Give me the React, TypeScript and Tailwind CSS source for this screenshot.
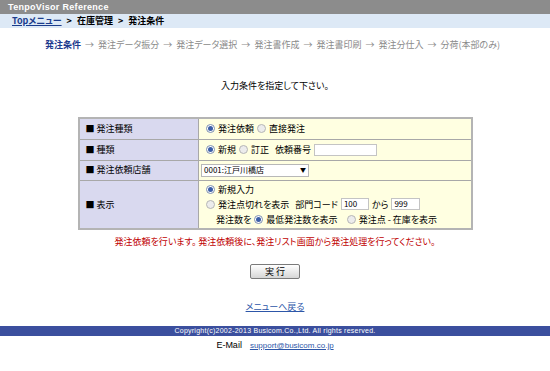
import React from 'react';

const Radio = ({ on }: { on?: boolean }) => (
  <span
    className={`inline-flex items-center justify-center w-[9px] h-[9px] rounded-full border ${
      on ? 'border-[#7d8fb0] bg-white' : 'border-[#b5b5b5] bg-[#ececec]'
    }`}
  >
    {on && <span className="w-[5px] h-[5px] rounded-full bg-[#3b5ea8]" />}
  </span>
);

const Box = ({ w, value }: { w: string; value?: string }) => (
  <span className={`inline-flex items-center ${w} h-[12px] border border-[#c4c4c4] bg-white px-[2px] text-[8px] leading-none`}>
    {value}
  </span>
);

const steps = ['発注データ振分', '発注データ選択', '発注書作成', '発注書印刷', '発注分仕入', '分荷(本部のみ)'];

const App = () => {
  return (
    <div
      className="w-[550px] h-[371px] bg-white text-[9px] text-black overflow-hidden [font-feature-settings:'palt']"
      style={{ fontFamily: '"Noto Sans CJK JP", "Liberation Sans", sans-serif' }}
    >
      <div
        className="h-[14px] bg-[#8c8c8c] pl-[8px] leading-[14px] font-bold text-white tracking-[0.3px]"
        style={{ fontFamily: '"Liberation Sans", sans-serif' }}
      >
        TenpoVisor Reference
      </div>
      <div className="h-[14px] bg-[#dde9f6] pl-[12px] leading-[14px] font-bold">
        <span className="underline text-[#1b3c8c]">Topメニュー</span>
        <span className="mx-[5px]">&gt;</span>在庫管理<span className="mx-[5px]">&gt;</span>発注条件
      </div>

      <div className="mt-[11px] h-[12px] leading-[12px] pl-[45px] flex items-center text-[#8a8a8a]">
        <span className="font-bold text-[#1d3b8e]">発注条件</span>
        {steps.map(s => (
          <React.Fragment key={s}>
            <span className="mx-[4px]">→</span>
            <span>{s}</span>
          </React.Fragment>
        ))}
      </div>

      <div className="mt-[29px] h-[12px] leading-[12px] text-center">入力条件を指定して下さい。</div>

      <table className="mt-[25px] mx-auto w-[395px] border-collapse border-2 border-[#b4b4b4]">
        <tbody>
          <tr className="h-[21px]">
            <td className="w-[120px] bg-[#d9d9ef] border border-[#a8a8a8] pl-[6px]">■ 発注種類</td>
            <td className="bg-[#ffffe1] border border-[#a8a8a8] pl-[7px]">
              <div className="flex items-center gap-[3px]">
                <Radio on /> <span>発注依頼</span> <Radio /> <span>直接発注</span>
              </div>
            </td>
          </tr>
          <tr className="h-[21px]">
            <td className="bg-[#d9d9ef] border border-[#a8a8a8] pl-[6px]">■ 種類</td>
            <td className="bg-[#ffffe1] border border-[#a8a8a8] pl-[7px]">
              <div className="flex items-center gap-[3px]">
                <Radio on /> <span>新規</span> <Radio /> <span>訂正</span>
                <span className="ml-[3px]">依頼番号</span>
                <Box w="w-[63px]" />
              </div>
            </td>
          </tr>
          <tr className="h-[20px]">
            <td className="bg-[#d9d9ef] border border-[#a8a8a8] pl-[6px]">■ 発注依頼店舗</td>
            <td className="bg-[#ffffe1] border border-[#a8a8a8] pl-[2px]">
              <span className="inline-flex items-center justify-between w-[108px] h-[13px] border border-[#b8b8b8] bg-white px-[2px] text-[8px] leading-none">
                <span>0001:江戸川橋店</span>
                <span className="text-[6px]">▼</span>
              </span>
            </td>
          </tr>
          <tr className="h-[49px]">
            <td className="bg-[#d9d9ef] border border-[#a8a8a8] pl-[6px]">■ 表示</td>
            <td className="bg-[#ffffe1] border border-[#a8a8a8] pl-[7px]">
              <div className="flex flex-col gap-[3px]">
                <div className="flex items-center gap-[3px] h-[12px]">
                  <Radio on /> <span>新規入力</span>
                </div>
                <div className="flex items-center gap-[3px] h-[12px]">
                  <Radio /> <span>発注点切れを表示</span>
                  <span className="ml-[3px]">部門コード</span>
                  <Box w="w-[28px]" value="100" />
                  <span>から</span>
                  <Box w="w-[29px]" value="999" />
                </div>
                <div className="flex items-center gap-[3px] h-[12px] pl-[10px]">
                  <span>発注数を</span> <Radio on /> <span>最低発注数を表示</span>
                  <span className="ml-[6px] flex"><Radio /></span> <span>発注点 - 在庫を表示</span>
                </div>
              </div>
            </td>
          </tr>
        </tbody>
      </table>

      <div className="mt-[6px] h-[12px] leading-[12px] text-center text-[#c00000]">
        発注依頼を行います。 発注依頼後に、発注リスト画面から発注処理を行ってください。
      </div>

      <div className="mt-[16px] flex justify-center">
        <button className="w-[50px] h-[15px] border border-[#7a7a7a] rounded-[2px] bg-gradient-to-b from-white to-[#d6d6d6] text-[9px] leading-none">
          実 行
        </button>
      </div>

      <div className="mt-[22px] h-[12px] leading-[12px] text-center">
        <span className="underline text-[#2d56a8]">メニューへ戻る</span>
      </div>

      <div
        className="mt-[13px] h-[10px] bg-[#3b4f9e] text-white text-[7px] leading-[10px] text-center tracking-[0.25px]"
        style={{ fontFamily: '"Liberation Sans", sans-serif' }}
      >
        Copyright(c)2002-2013 Busicom.Co.,Ltd. All rights reserved.
      </div>
      <div className="mt-[3px] h-[12px] leading-[12px] text-center" style={{ fontFamily: '"Liberation Sans", sans-serif' }}>
        <span className="text-[9px]">E-Mail</span>
        <span className="ml-[8px] underline text-[#2d56a8] text-[8px]">support@busicom.co.jp</span>
      </div>
    </div>
  );
};

export default App;
